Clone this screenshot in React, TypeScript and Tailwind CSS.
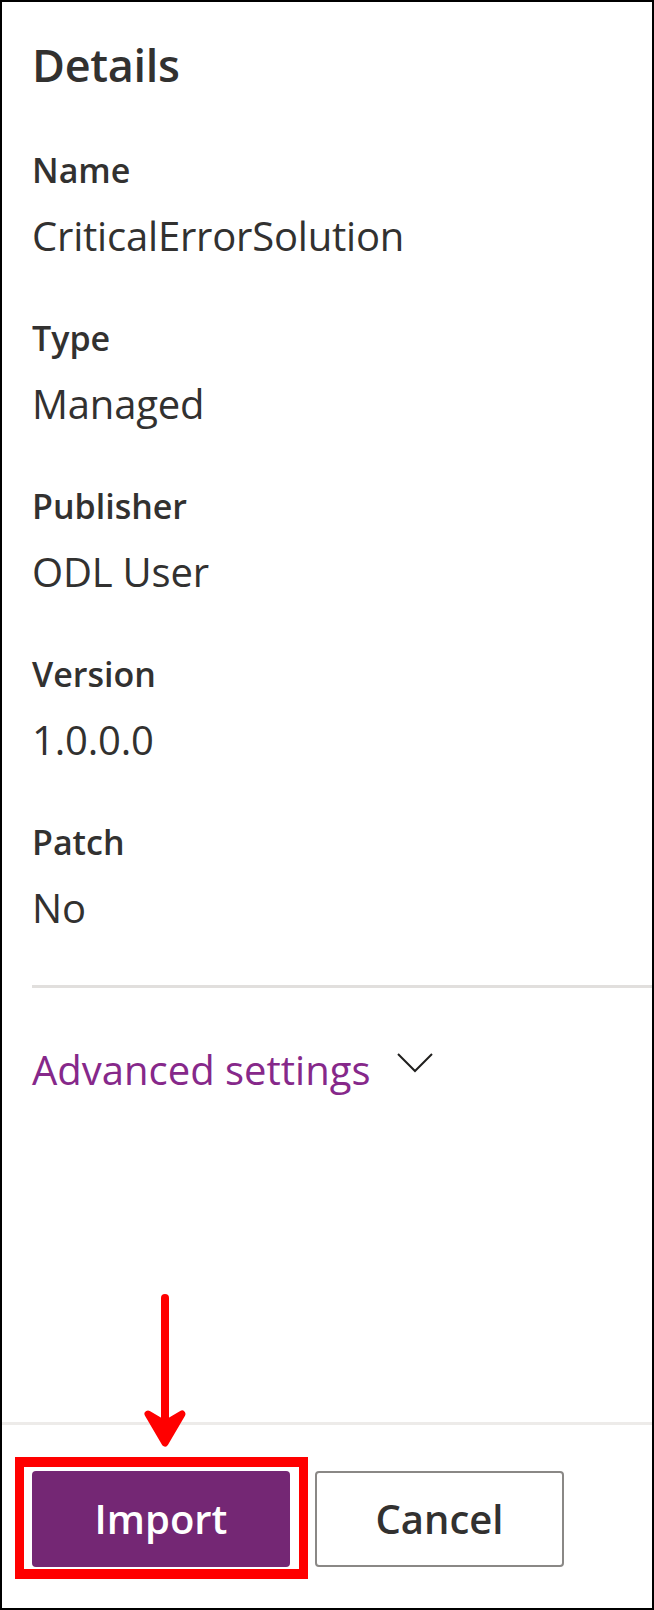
const fields = [
  { label: "Name", value: "CriticalErrorSolution" },
  { label: "Type", value: "Managed" },
  { label: "Publisher", value: "ODL User" },
  { label: "Version", value: "1.0.0.0" },
  { label: "Patch", value: "No" },
];

export default function App() {
  return (
    <div className="relative flex h-[1610px] w-[654px] flex-col border-2 border-black bg-white font-['Open_Sans','Noto_Sans',sans-serif] text-[#323130]">
      {/* Details panel */}
      <div className="flex-1 pl-[30px] pt-[31px]">
        <h2 className="text-[45px] font-semibold leading-[64px] tracking-[-0.3px]">Details</h2>

        <div className="mt-[51px] flex flex-col gap-[54px]">
          {fields.map((f) => (
            <div key={f.label}>
              <div className="text-[34px] font-semibold leading-[44px]">{f.label}</div>
              <div className="mt-[18px] text-[40px] leading-[52px] tracking-[-0.2px]">{f.value}</div>
            </div>
          ))}
        </div>

        <div className="mt-[51px] h-[3px] bg-[#e1dfdd]" />

        <button className="mt-[56px] flex items-center gap-[27px] text-[40px] leading-[52px] text-[#86288a]">
          Advanced settings
          <svg width="36" height="20" viewBox="0 0 36 20" className="mt-[-14px]">
            <polyline points="1,1 18,18 35,1" fill="none" stroke="#201f1e" strokeWidth="2" />
          </svg>
        </button>
      </div>

      {/* Footer */}
      <div className="flex gap-[25px] border-t-[3px] border-[#edebe9] pb-[41px] pl-[30px] pt-[46px]">
        <button className="h-[96px] w-[258px] rounded-[4px] bg-[#742774] text-[40px] font-semibold text-white">
          Import
        </button>
        <button className="h-[96px] w-[249px] rounded-[4px] border-2 border-[#8a8886] bg-white text-[40px] font-semibold text-[#323130]">
          Cancel
        </button>
      </div>

      {/* Annotation: red box + arrow */}
      <div className="pointer-events-none absolute left-[13px] top-[1455px] h-[122px] w-[293px] border-x-[9px] border-y-[10px] border-[#ff0000]" />
      <svg
        className="pointer-events-none absolute left-[128px] top-[1278px]"
        width="70"
        height="180"
        viewBox="130 1280 70 180"
      >
        <line x1="165" y1="1298" x2="165" y2="1422" stroke="#ff0000" strokeWidth="8" strokeLinecap="round" />
        <path d="M148 1414 L165 1424 L182 1414 L165 1443 Z" fill="#ff0000" stroke="#ff0000" strokeWidth="7" strokeLinejoin="round" />
      </svg>
    </div>
  );
}
